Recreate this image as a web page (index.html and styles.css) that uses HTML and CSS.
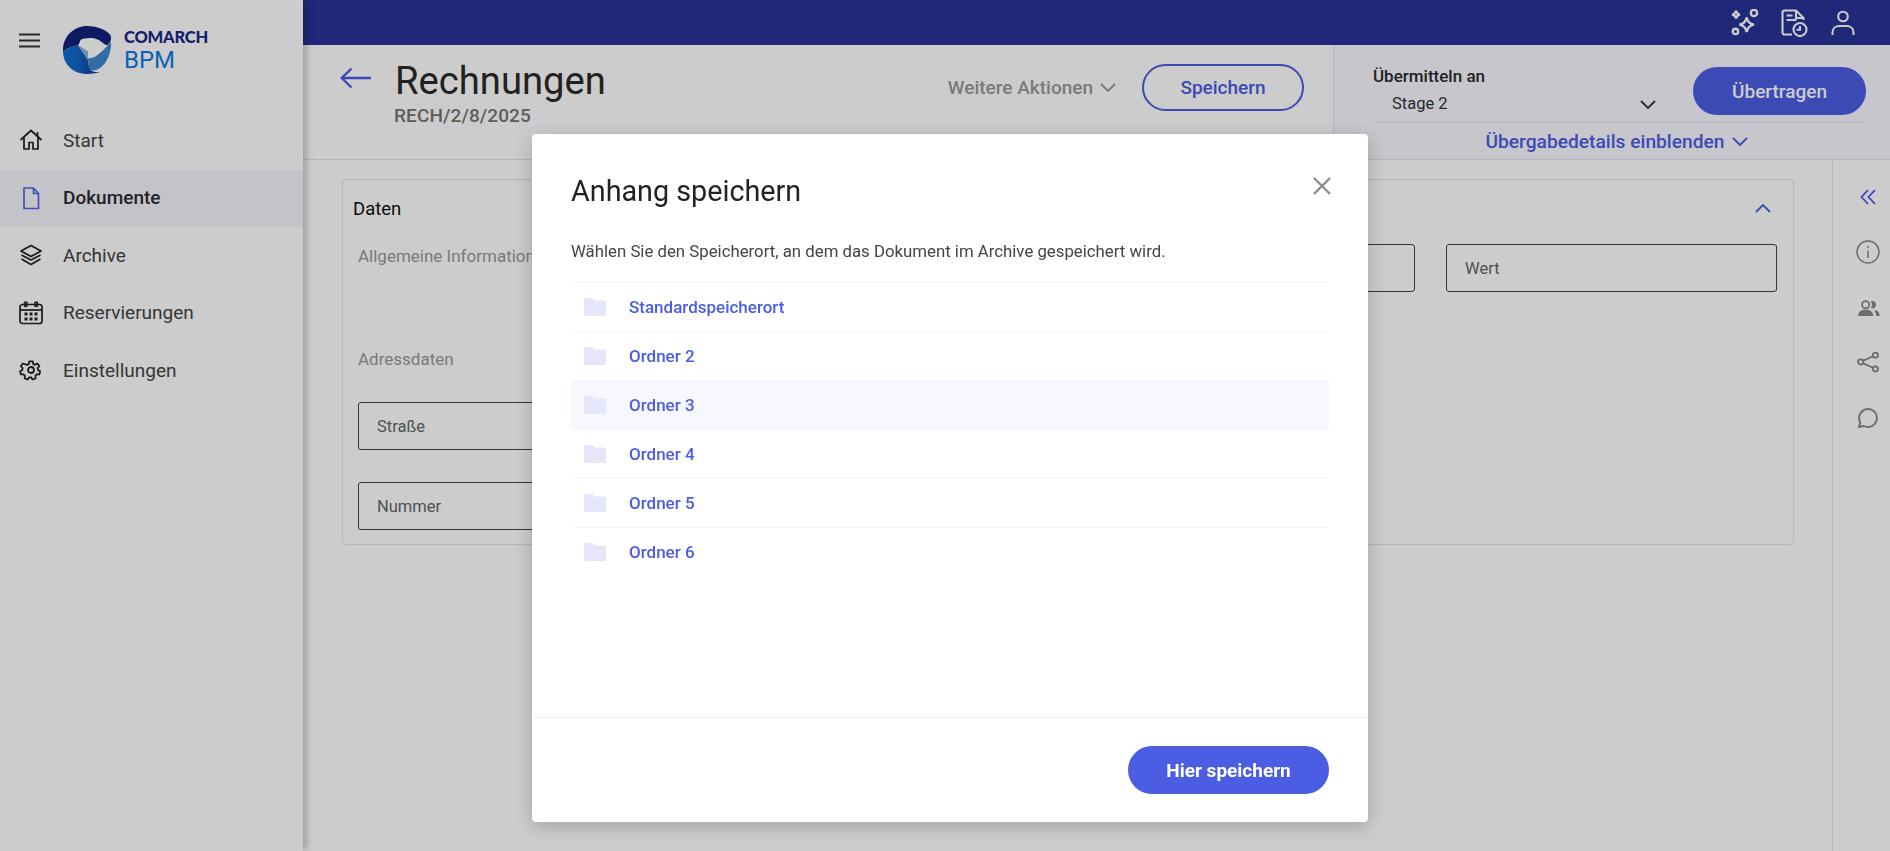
FILE: index.html
```html
<!DOCTYPE html>
<html lang="de">
<head>
<meta charset="utf-8">
<title>Rechnungen</title>
<link rel="stylesheet" href="styles.css">
</head>
<body>
<div class="app">
  <aside class="sidebar">
    <div class="brand">
      <svg class="burger" viewBox="0 0 22 15"><path d="M0 1.500h21M0 7.500h21M0 13.500h21"/></svg>
      <svg class="logo" viewBox="0 0 48 48">
        <defs>
          <linearGradient id="lg" x1="0" y1="0" x2="1" y2="0"><stop offset="0" stop-color="#0b72d6"/><stop offset="0.45" stop-color="#0f64c4"/><stop offset="1" stop-color="#1a2c8c"/></linearGradient>
        </defs>
        <path fill="#12217e" d="M0 26C-1 11 10.700 0 24 0c9 0 18 3 22.500 8 1.500 1.800 1.800 4 1.500 5-.5 3.500-3 6-4 6-2 0-4-2-6-3.500-3-2.200-6.500-3.700-10.500-3.500-3.500.2-8.500.6-10 2-.8 1-.5 3.200-2.500 5C10 21 3 22 0 26z"/>
        <path fill="url(#lg)" d="M0 26c3-4 10-5 15-7l10 15c.5 4 1 8 3 10.500 2.500 1.800 6 1.700 9 1.500C33 47 28 48 24 48 10.700 48 .5 39 0 26z"/>
        <path fill="#3f88cf" d="M48 16c.8 14-8 30-20 28.500C26 42 25.300 38 25 32.500c3.500-.3 8-1.500 12-5.500 4-3 7-7.500 11-11z"/>
        <path fill="#86b3df" d="M15 19l10 6.500v8.500z"/>
      </svg>
      <div class="brand-text"><span class="brand-top">COMARCH</span><span class="brand-bpm">BPM</span></div>
    </div>
    <nav class="nav">
      <a class="nav-item"><svg class="ico ico-wide" viewBox="0 0 24 24"><path d="M1.500 12 12 2.500 22.500 12M5 9.500V21h5v-6.500h4V21h5V9.500"/><path d="M18.500 4v4"/></svg><span>Start</span></a>
      <a class="nav-item active"><svg class="ico doc" viewBox="0 0 24 24"><path d="M5 2h9.500l5 5.500V22.500H5zM14.500 2v5.500h5"/></svg><span>Dokumente</span></a>
      <a class="nav-item"><svg class="ico ico-wide" viewBox="0 0 24 24"><path d="M12 2.500 22 8l-10 5.500L2 8zM2.500 12 12 17l9.500-5M2.500 16 12 21.500 21.500 16"/></svg><span>Archive</span></a>
      <a class="nav-item"><svg class="ico cal" viewBox="0 0 24 24"><rect x="1" y="3.500" width="22" height="19" rx="2.500"/><path d="M1 9h22"/><rect x="5.500" y="1" width="2.500" height="4.500" rx="1.200"/><rect x="16" y="1" width="2.500" height="4.500" rx="1.200"/><path class="dots" d="M5.500 11.500h3v3h-3zM10.500 11.500h3v3h-3zM15.500 11.500h3v3h-3zM5.500 16.500h3v3h-3zM10.500 16.500h3v3h-3zM15.500 16.500h3v3h-3z"/></svg><span>Reservierungen</span></a>
      <a class="nav-item"><svg class="ico gear" viewBox="-2 -2 28 28"><circle cx="12" cy="12" r="3.500"/><path d="M10 2h4l.6 3 2.200 1 2.600-1.600 2.400 3-2 2.300.3 2.300 2.600 1.500-1 3.700-3-.1-1.600 1.700.3 3-3.600 1.300-1.700-2.500h-2.200l-1.700 2.500-3.600-1.300.3-3-1.600-1.700-3 .1-1-3.700 2.600-1.500.3-2.300-2-2.300 2.400-3L7.200 6l2.200-1z"/></svg><span>Einstellungen</span></a>
    </nav>
  </aside>

  <div class="main">
    <header class="topbar">
      <svg class="top-ico" viewBox="2 2 25 25"><path d="M16 9.500c.8 4 2.500 5.700 6.500 6.500-4 .8-5.700 2.500-6.500 6.500-.8-4-2.500-5.700-6.500-6.500 4-.8 5.700-2.500 6.500-6.500z"/><path d="M6.500 3.500c.4 2.200 1.300 3.100 3.500 3.500-2.200.4-3.100 1.300-3.500 3.500C6.100 8.300 5.200 7.400 3 7c2.200-.4 3.100-1.300 3.500-3.500z"/><circle cx="22.500" cy="5.500" r="2.800"/><circle cx="6" cy="22" r="2.400"/></svg>
      <svg class="top-ico" viewBox="0 0 28 28"><path d="M12 25.500H4.500a2 2 0 0 1-2-2V3.500a2 2 0 0 1 2-2H16l7.500 7.500v2"/><path d="M16 1.500V9h7.500M6.500 6.500h6M6.500 11h10"/><circle cx="20" cy="20.500" r="6.500"/><path d="M20 17v3.800h-3.500"/></svg>
      <svg class="top-ico" viewBox="0 0 28 28"><circle cx="14" cy="7.500" r="4.800"/><path d="M3.500 26v-2.500c0-4 3-6.500 7-6.500h7c4 0 7 2.500 7 6.500V26"/></svg>
    </header>

    <section class="pagehead">
      <div class="head-left">
        <svg class="back" viewBox="0 0 32 22"><path d="M31 11H2M11.500 1.500 1.800 11l9.700 9.500"/></svg>
        <div class="titles">
          <h1 class="title">Rechnungen</h1>
          <div class="docno">RECH/2/8/2025</div>
        </div>
        <div class="head-actions">
          <span class="more">Weitere Aktionen<svg class="chev" viewBox="0 0 16 9"><path d="M1 1l7 7 7-7"/></svg></span>
          <button class="btn-outline">Speichern</button>
        </div>
      </div>
      <div class="transfer">
        <div class="transfer-top">
          <div class="transfer-select">
            <div class="transfer-label">Übermitteln an</div>
            <div class="transfer-value"><span>Stage 2</span><svg class="chev dark" viewBox="0 0 16 9"><path d="M1 1l7 7 7-7"/></svg></div>
          </div>
          <button class="btn-fill">Übertragen</button>
        </div>
        <div class="transfer-more">Übergabedetails einblenden<svg class="chev blue" viewBox="0 0 16 9"><path d="M1 1l7 7 7-7"/></svg></div>
      </div>
    </section>

    <section class="body">
      <div class="content">
        <div class="card">
          <div class="card-head"><span>Daten</span><svg class="chev blue" viewBox="0 0 16 9"><path d="M1 8l7-7 7 7"/></svg></div>
          <div class="card-grid">
            <div class="card-col">
              <div class="group-label">Allgemeine Informationen</div>
              <div class="group-label second">Adressdaten</div>
              <div class="field">Straße</div>
              <div class="field">Nummer</div>
            </div>
            <div class="card-col right">
              <div class="field-row">
                <div class="field narrow"></div>
                <div class="field wide">Wert</div>
              </div>
            </div>
          </div>
        </div>
      </div>
      <aside class="strip">
        <svg class="strip-ico blue s-chev" viewBox="0 0 16 16"><path d="M8 1 1.500 8 8 15M15 1 8.500 8 15 15"/></svg>
        <svg class="strip-ico s-info" viewBox="0 0 24 24"><circle cx="12" cy="12" r="11"/><path d="M12 10.500V18M12 6v2.200"/></svg>
        <svg class="strip-ico s-people" viewBox="0 0 24 18"><circle cx="9" cy="5" r="3.800"/><path class="solid" d="M1 17c0-5 3.500-6.800 8-6.800s8 1.800 8 6.800z"/><path class="solid" d="M14.500 1.200c3.200-.8 5.500 1.200 5.500 3.800s-2.300 4.600-5.500 3.800c1.500-2.300 1.500-5.300 0-7.600zM18 10.600c3.500.3 5.800 2.500 5.800 6.400H20c0-2.600-.5-4.800-2-6.400z"/></svg>
        <svg class="strip-ico s-share" viewBox="0 0 24 24"><circle cx="20" cy="4.500" r="2.800"/><circle cx="4" cy="12" r="2.800"/><circle cx="20" cy="19.500" r="2.800"/><path d="M17.500 5.700 6.500 10.800M6.500 13.200l11 5.100"/></svg>
        <svg class="strip-ico s-chat" viewBox="0 0 20 20"><path d="M1 19l1.300-4.500C1.500 13.200 1 11.700 1 10.300 1 5.200 5 1 10 1s9 4 9 9-4 9-9 9c-1.500 0-3-.3-4.200-1z"/></svg>
      </aside>
    </section>
  </div>
</div>

<div class="overlay"></div>

<div class="modal">
  <div class="modal-main">
    <div class="modal-head">
      <h2 class="modal-title">Anhang speichern</h2>
      <svg class="close" viewBox="0 0 18 18"><path d="M1 1l16 16M17 1 1 17"/></svg>
    </div>
    <p class="modal-desc">Wählen Sie den Speicherort, an dem das Dokument im Archive gespeichert wird.</p>
    <ul class="folders">
      <li class="folder"><svg class="folder-ico" viewBox="0 0 22 18"><path d="M1.500 0H8l3 2.500h9.500A1.500 1.500 0 0 1 22 4v12.500a1.500 1.500 0 0 1-1.500 1.500h-19A1.500 1.500 0 0 1 0 16.500v-15A1.500 1.500 0 0 1 1.500 0z"/></svg><span>Standardspeicherort</span></li>
      <li class="folder"><svg class="folder-ico" viewBox="0 0 22 18"><path d="M1.500 0H8l3 2.500h9.500A1.500 1.500 0 0 1 22 4v12.500a1.500 1.500 0 0 1-1.500 1.500h-19A1.500 1.500 0 0 1 0 16.500v-15A1.500 1.500 0 0 1 1.500 0z"/></svg><span>Ordner 2</span></li>
      <li class="folder hover"><svg class="folder-ico" viewBox="0 0 22 18"><path d="M1.500 0H8l3 2.500h9.500A1.500 1.500 0 0 1 22 4v12.500a1.500 1.500 0 0 1-1.500 1.500h-19A1.500 1.500 0 0 1 0 16.500v-15A1.500 1.500 0 0 1 1.500 0z"/></svg><span>Ordner 3</span></li>
      <li class="folder"><svg class="folder-ico" viewBox="0 0 22 18"><path d="M1.500 0H8l3 2.500h9.500A1.500 1.500 0 0 1 22 4v12.500a1.500 1.500 0 0 1-1.500 1.500h-19A1.500 1.500 0 0 1 0 16.500v-15A1.500 1.500 0 0 1 1.500 0z"/></svg><span>Ordner 4</span></li>
      <li class="folder"><svg class="folder-ico" viewBox="0 0 22 18"><path d="M1.500 0H8l3 2.500h9.500A1.500 1.500 0 0 1 22 4v12.500a1.500 1.500 0 0 1-1.500 1.500h-19A1.500 1.500 0 0 1 0 16.500v-15A1.500 1.500 0 0 1 1.500 0z"/></svg><span>Ordner 5</span></li>
      <li class="folder"><svg class="folder-ico" viewBox="0 0 22 18"><path d="M1.500 0H8l3 2.500h9.500A1.500 1.500 0 0 1 22 4v12.500a1.500 1.500 0 0 1-1.500 1.500h-19A1.500 1.500 0 0 1 0 16.500v-15A1.500 1.500 0 0 1 1.500 0z"/></svg><span>Ordner 6</span></li>
    </ul>
  </div>
  <div class="modal-foot"><button class="btn-primary">Hier speichern</button></div>
</div>
</body>
</html>
```
FILE: styles.css
```css
* { box-sizing: border-box; }
html, body { margin: 0; height: 100%; overflow: hidden; }
body { font-family: Roboto, "Noto Sans", sans-serif; color: #333; background: #fff; }
svg { display: block; flex: none; fill: none; stroke: currentColor; }
button { font-family: inherit; cursor: pointer; }

.app { display: flex; height: 851px; width: 1890px; }

/* sidebar */
.sidebar { width: 303px; flex: none; background: #fff; box-shadow: 3px 0 8px rgba(0,0,0,.25); position: relative; z-index: 2; }
.brand { display: flex; height: 74px; padding: 26px 0 0 19px; }
.burger { width: 22px; height: 15px; margin-top: 7px; stroke: #333; stroke-width: 1.800; }
.logo { width: 48px; height: 48px; margin-left: 22px; stroke: none; }
.brand-text { display: flex; flex-direction: column; margin-left: 13px; }
.brand-top { font-family: Lato, sans-serif; font-weight: 900; font-size: 16.500px; line-height: 17px; margin-top: 3px; color: #182688; letter-spacing: -.2px; }
.brand-bpm { font-size: 24px; font-weight: 400; line-height: 24px; margin-top: 2px; color: #0d7ae6; }
.nav { display: flex; flex-direction: column; margin-top: 38px; }
.nav-item { display: flex; align-items: center; height: 57.500px; padding-left: 19px; padding-bottom: 1px; font-size: 19px; color: #444; }
.nav-item span { margin-left: 20px; }
.nav-item.active { background: #f5f6fb; color: #2c2c2c; font-weight: 500; }
.ico { width: 24px; height: 24px; stroke: #222; stroke-width: 1.700; stroke-linejoin: round; }
.ico.doc { stroke: #5464e8; }
.ico.gear { stroke-width: 2.100; }
.ico.cal .dots { fill: #222; stroke: none; }

/* main */
.main { flex: 1; min-width: 0; display: flex; flex-direction: column; }
.topbar { height: 45px; flex: none; background: #283498; display: flex; justify-content: flex-end; align-items: center; gap: 21px; padding: 0 33px 0 0; }
.top-ico { width: 28px; height: 28px; stroke: #fff; stroke-width: 2.100; }

.pagehead { height: 115px; flex: none; display: flex; border-bottom: 1px solid #e3e3f4; }
.head-left { flex: 1; display: flex; padding: 0 29px 0 37px; position: relative; }
.back { width: 32px; height: 22px; margin-top: 22px; stroke: #4b5de3; stroke-width: 2.400; }
.titles { margin-left: 23px; }
.title { margin: 13px 0 0; font-size: 38.200px; font-weight: 400; line-height: 46px; color: #2a2a2a; }
.docno { font-size: 19px; font-weight: 500; line-height: 20px; margin-top: 2px; margin-left: -1px; letter-spacing: .1px; color: #757575; }
.head-actions { margin-left: auto; display: flex; align-items: flex-start; padding-top: 19px; }
.more { display: flex; align-items: center; height: 47px; font-size: 19px; font-weight: 500; color: #999; }
.chev { width: 16px; height: 9px; stroke-width: 1.800; }
.more .chev { margin-left: 7px; stroke: #999; }
.chev.dark { stroke: #333; }
.chev.blue { stroke: #4b5de3; }
.btn-outline { margin-left: 26px; width: 162px; height: 47px; border-radius: 24px; border: 2px solid #4b5de3; background: transparent; color: #4b5de3; font-size: 19px; font-weight: 500; }

.transfer { width: 557px; flex: none; background: #f9f8ff; border-left: 1px solid #e3e3f4; padding: 0 24px 0 39px; }
.transfer-top { display: flex; height: 78px; border-bottom: 1px solid #e3e3f4; padding-top: 22px; justify-content: space-between; align-items: flex-start; }
.transfer-select { width: 300px; }
.transfer-label { font-size: 17px; font-weight: 500; line-height: 20px; margin-top: -1px; color: #2a2a2a; }
.transfer-value { display: flex; justify-content: space-between; align-items: center; margin-top: 8px; padding: 0 0 0 19px; font-size: 16.500px; line-height: 20px; color: #333; }
.transfer-value .chev { margin-right: 17px; }
.btn-fill { width: 173px; height: 48px; border-radius: 24px; border: 0; background: #4b5de3; color: #fff; font-size: 19px; font-weight: 500; }
.transfer-more { display: flex; justify-content: center; align-items: center; height: 36px; padding-right: 6px; font-size: 19.200px; font-weight: 500; color: #4b5de3; }
.transfer-more .chev { margin-left: 7px; }

.body { flex: 1; display: flex; min-height: 0; }
.content { flex: 1; padding: 19px 38px 0 39px; }
.card { height: 366px; border: 1px solid #e3e3f4; border-radius: 3px; position: relative; }
.card-head { display: flex; justify-content: space-between; align-items: center; height: 56px; padding: 0 22px 0 10px; font-size: 18.500px; color: #111; }
.card-head span { margin-top: 1px; }
.card-grid { display: flex; justify-content: space-between; padding: 0 15px; }
.card-col { width: 360px; }
.group-label { font-size: 17px; line-height: 20px; margin-top: 10px; color: #999; }
.group-label.second { margin-top: 83px; }
.field { height: 48px; border: 1px solid #444; border-radius: 3px; padding: 0 18px; display: flex; align-items: center; font-size: 16.500px; color: #666; margin-top: 32px; }
.group-label.second + .field { margin-top: 33px; }
.card-col.right { width: 700px; }
.field-row { display: flex; gap: 31px; margin-top: 8px; margin-right: 1px; }
.field-row .field { margin-top: 0; }
.field.narrow { flex: 1; }
.field.wide { width: 331px; flex: none; }

.strip { width: 58px; flex: none; border-left: 1px solid #e3e3f4; display: flex; flex-direction: column; align-items: center; height: 100%; padding: 0 0 0 13px; position: relative; }
.strip-ico { stroke: #888; stroke-width: 1.900; }
.strip-ico.blue { stroke: #4b5de3; stroke-width: 1.800; }
.s-chev { width: 16px; height: 16px; margin-top: 29px; }
.s-info { width: 24px; height: 24px; margin-top: 35px; stroke-width: 1.500; }
.s-people { width: 23px; height: 17px; margin-top: 36px; }
.s-share { width: 22px; height: 22px; margin-top: 34px; }
.s-chat { width: 20px; height: 20px; margin-top: 35px; }
.strip-ico .solid { fill: #888; stroke: none; }

/* modal */
.overlay { position: fixed; inset: 0; background: rgba(0,0,0,.2); z-index: 5; }
.modal { position: fixed; left: 532px; top: 134px; width: 836px; height: 688px; background: #fff; border-radius: 4px; z-index: 6; box-shadow: 0 4px 20px rgba(0,0,0,.22); display: flex; flex-direction: column; }
.modal-main { flex: 1; padding: 0 39px; border-bottom: 1px solid #f2f2f6; }
.modal-head { display: flex; justify-content: space-between; padding-top: 38px; height: 96px; }
.modal-title { margin: 0; font-size: 28.750px; font-weight: 400; line-height: 38px; color: #222; }
.close { width: 18px; height: 18px; margin-top: 5px; margin-right: -2px; stroke: #8a8a8a; stroke-width: 2.300; margin-left: auto; }
.modal-desc { margin: 0; padding-top: 11px; font-size: 16.800px; line-height: 20px; color: #444; height: 52px; }
.folders { list-style: none; margin: 0; padding: 0; border-top: 1px solid #f4f4f9; }
.folder { display: flex; align-items: center; height: 49px; border-bottom: 1px solid #f4f4f9; padding-left: 13px; font-size: 17px; font-weight: 500; color: #4b5de3; }
.folder:last-child { border-bottom-color: transparent; }
.folder.hover { background: #f7f8ff; border-bottom-color: #f7f8ff; }
.folder span { margin-left: 23px; }
.folder-ico { width: 22px; height: 18px; fill: #e6e6fa; stroke: none; }
.modal-foot { height: 104px; flex: none; display: flex; justify-content: flex-end; padding: 28px 39px 0 0; }
.btn-primary { width: 201px; height: 48px; border: 0; border-radius: 24px; background: #4b5de3; color: #fff; font-size: 19px; font-weight: 700; }
```
